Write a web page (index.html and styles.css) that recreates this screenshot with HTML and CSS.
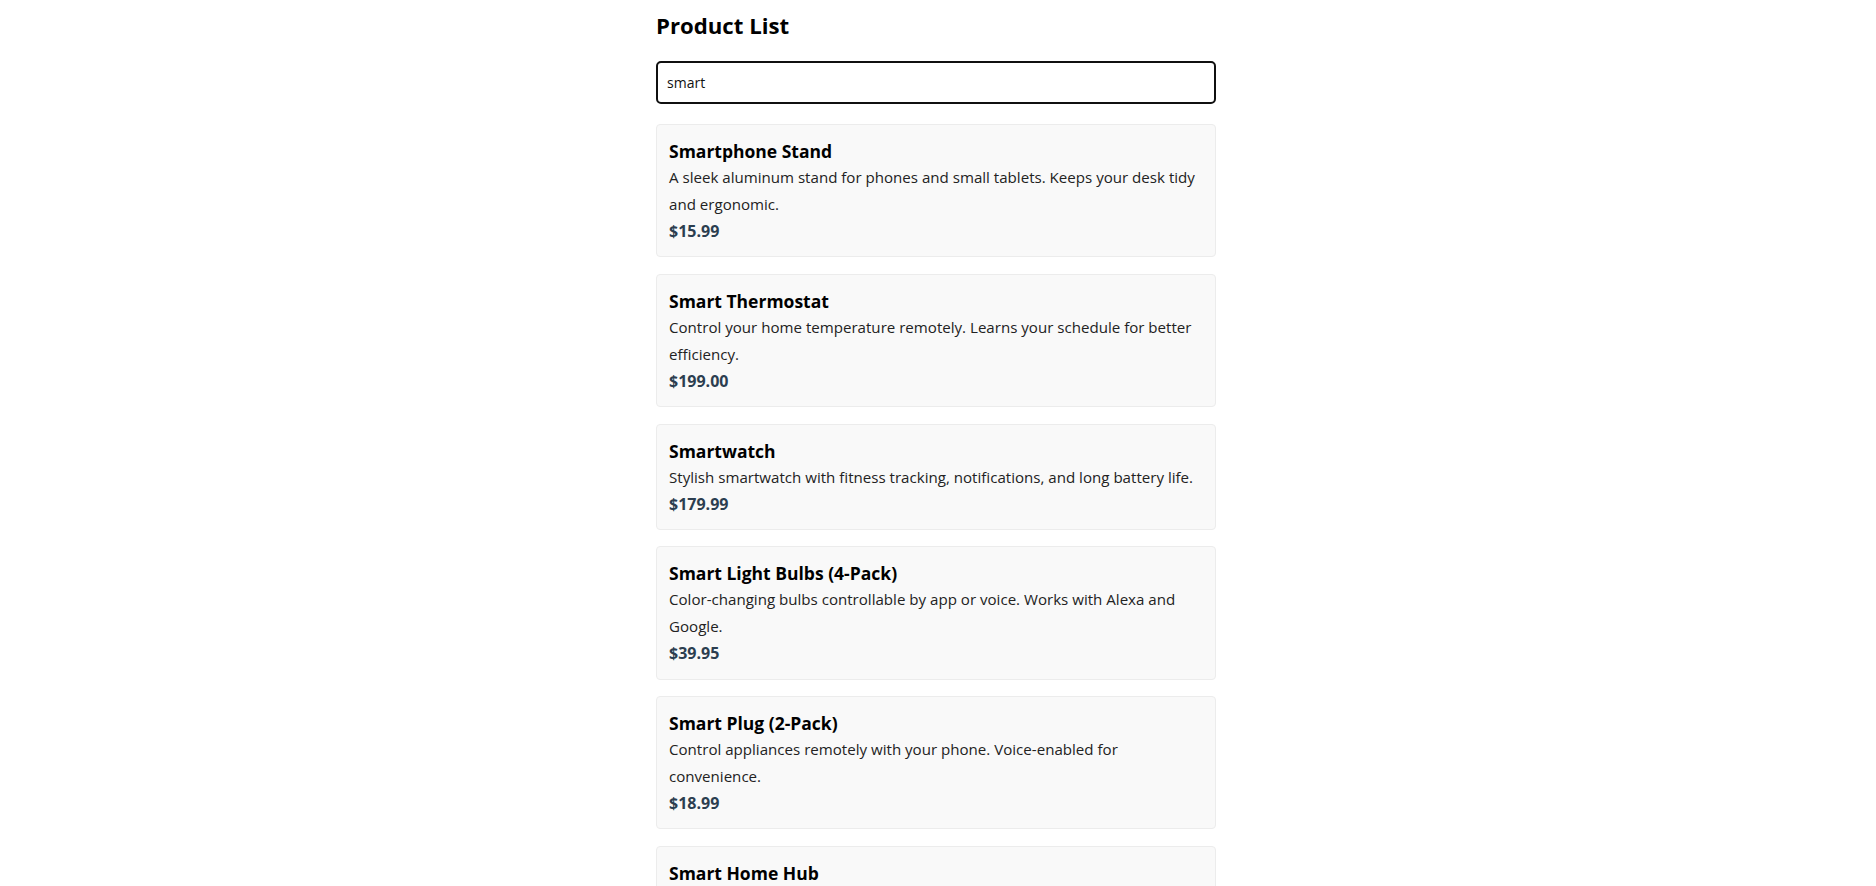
FILE: index.html
```html
<!DOCTYPE html>
<html lang="en">
<head>
<meta charset="utf-8">
<title>Product List</title>
<link rel="stylesheet" href="styles.css">
</head>
<body>
<main class="container">
  <h2 class="page-title">Product List</h2>
  <input class="search" type="text" value="smart" aria-label="Search products">
  <ul class="product-list">
    <li class="card">
      <h3 class="card-title">Smartphone Stand</h3>
      <p class="card-desc">A sleek aluminum stand for phones and small tablets. Keeps your desk tidy and ergonomic.</p>
      <p class="card-price">$15.99</p>
    </li>
    <li class="card">
      <h3 class="card-title">Smart Thermostat</h3>
      <p class="card-desc">Control your home temperature remotely. Learns your schedule for better efficiency.</p>
      <p class="card-price">$199.00</p>
    </li>
    <li class="card">
      <h3 class="card-title">Smartwatch</h3>
      <p class="card-desc">Stylish smartwatch with fitness tracking, notifications, and long battery life.</p>
      <p class="card-price">$179.99</p>
    </li>
    <li class="card">
      <h3 class="card-title">Smart Light Bulbs (4-Pack)</h3>
      <p class="card-desc">Color-changing bulbs controllable by app or voice. Works with Alexa and Google.</p>
      <p class="card-price">$39.95</p>
    </li>
    <li class="card">
      <h3 class="card-title">Smart Plug (2-Pack)</h3>
      <p class="card-desc">Control appliances remotely with your phone. Voice-enabled for convenience.</p>
      <p class="card-price">$18.99</p>
    </li>
    <li class="card">
      <h3 class="card-title">Smart Home Hub</h3>
      <p class="card-desc">Connect and control all your smart devices from one central hub.</p>
      <p class="card-price">$89.99</p>
    </li>
  </ul>
</main>
</body>
</html>
```

FILE: styles.css
```css
* { box-sizing: border-box; }
body {
  margin: 0;
  background: #fff;
  color: #222;
  font-family: "Open Sans", "Noto Sans", sans-serif;
  font-size: 15.1px;
}
.container {
  width: 560px;
  margin: 0 0 0 calc(50% - 282px);
}
.page-title {
  margin: 10px 0 19px;
  font-size: 22.2px;
  line-height: 32px;
  font-weight: 700;
  color: #000;
}
.search {
  display: block;
  width: 100%;
  height: 43px;
  padding: 0 9px;
  border: 2px solid #101010;
  border-radius: 5px;
  font-family: inherit;
  font-size: 14px;
  color: #111;
  caret-color: #000;
  outline: none;
}
.product-list {
  list-style: none;
  margin: 20px 0 0;
  padding: 0;
  display: flex;
  flex-direction: column;
  gap: 16.6px;
}
.card {
  background: #f9f9f9;
  border: 1px solid #ececec;
  border-radius: 4px;
  padding: 13px 12px 11px;
}
.card-title {
  margin: 0;
  font-size: 17.5px;
  line-height: 26px;
  font-weight: 700;
  color: #000;
}
.card-desc {
  margin: 0;
  line-height: 27px;
  color: #222;
}
.card-price {
  margin: 0;
  font-size: 16px;
  line-height: 27.2px;
  font-weight: 700;
  color: #2c3e50;
}
```
